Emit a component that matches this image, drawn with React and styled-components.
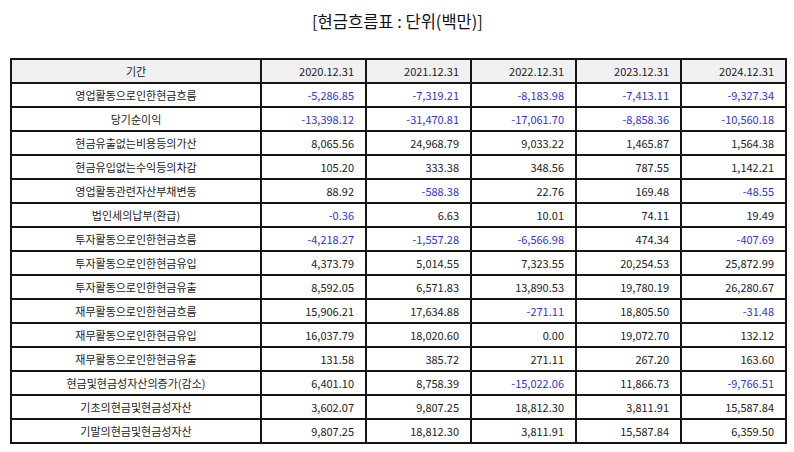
import React from "react";
import styled, { createGlobalStyle } from "styled-components";

const GlobalStyle = createGlobalStyle`
  html, body { margin: 0; padding: 0; background: #fff; }
  body { font-family: "Noto Sans CJK KR", "Noto Sans", sans-serif; }
`;

const Page = styled.div`
  width: 794px;
  padding: 10px 9px 0 10px;
  box-sizing: border-box;
`;

const Title = styled.h1`
  margin: 0 0 25px;
  height: 23px;
  line-height: 23px;
  text-align: center;
  font-size: 16.5px;
  font-weight: 400;
  color: #111;
`;

const Table = styled.table`
  width: 775px;
  border-collapse: collapse;
  table-layout: fixed;
  font-size: 11px;
  color: #222;
`;

const Col = styled.col`
  width: ${(p) => p.$w}px;
`;

const Row = styled.tr`
  height: 24px;
`;

const HeadCell = styled.th`
  border: 2px solid #151515;
  background: #f0f0f0;
  font-weight: 400;
  padding: 0 11px;
  text-align: ${(p) => (p.$first ? "center" : "right")};
  line-height: 19px;
`;

const NameCell = styled.td`
  border: 2px solid #151515;
  text-align: center;
  padding: 0 8px;
  line-height: 19px;
`;

const NumCell = styled.td`
  border: 2px solid #151515;
  text-align: right;
  padding: 0 11px;
  line-height: 19px;
  color: ${(p) => (p.$neg ? "#3434c8" : "#222")};
`;

const widths = [250, 105, 105, 105, 105, 105];

const years = ["2020.12.31", "2021.12.31", "2022.12.31", "2023.12.31", "2024.12.31"];

const rows = [
  ["영업활동으로인한현금흐름", "-5,286.85", "-7,319.21", "-8,183.98", "-7,413.11", "-9,327.34"],
  ["당기순이익", "-13,398.12", "-31,470.81", "-17,061.70", "-8,858.36", "-10,560.18"],
  ["현금유출없는비용등의가산", "8,065.56", "24,968.79", "9,033.22", "1,465.87", "1,564.38"],
  ["현금유입없는수익등의차감", "105.20", "333.38", "348.56", "787.55", "1,142.21"],
  ["영업활동관련자산부채변동", "88.92", "-588.38", "22.76", "169.48", "-48.55"],
  ["법인세의납부(환급)", "-0.36", "6.63", "10.01", "74.11", "19.49"],
  ["투자활동으로인한현금흐름", "-4,218.27", "-1,557.28", "-6,566.98", "474.34", "-407.69"],
  ["투자활동으로인한현금유입", "4,373.79", "5,014.55", "7,323.55", "20,254.53", "25,872.99"],
  ["투자활동으로인한현금유출", "8,592.05", "6,571.83", "13,890.53", "19,780.19", "26,280.67"],
  ["재무활동으로인한현금흐름", "15,906.21", "17,634.88", "-271.11", "18,805.50", "-31.48"],
  ["재무활동으로인한현금유입", "16,037.79", "18,020.60", "0.00", "19,072.70", "132.12"],
  ["재무활동으로인한현금유출", "131.58", "385.72", "271.11", "267.20", "163.60"],
  ["현금및현금성자산의증가(감소)", "6,401.10", "8,758.39", "-15,022.06", "11,866.73", "-9,766.51"],
  ["기초의현금및현금성자산", "3,602.07", "9,807.25", "18,812.30", "3,811.91", "15,587.84"],
  ["기말의현금및현금성자산", "9,807.25", "18,812.30", "3,811.91", "15,587.84", "6,359.50"],
];

export default function App() {
  return (
    <>
      <GlobalStyle />
      <Page>
        <Title>[현금흐름표 : 단위(백만)]</Title>
        <Table>
          <colgroup>
            {widths.map((w, i) => (
              <Col key={i} $w={w} />
            ))}
          </colgroup>
          <thead>
            <Row>
              <HeadCell $first>기간</HeadCell>
              {years.map((y) => (
                <HeadCell key={y}>{y}</HeadCell>
              ))}
            </Row>
          </thead>
          <tbody>
            {rows.map(([name, ...vals]) => (
              <Row key={name}>
                <NameCell>{name}</NameCell>
                {vals.map((v, i) => (
                  <NumCell key={i} $neg={v.startsWith("-")}>
                    {v}
                  </NumCell>
                ))}
              </Row>
            ))}
          </tbody>
        </Table>
      </Page>
    </>
  );
}
